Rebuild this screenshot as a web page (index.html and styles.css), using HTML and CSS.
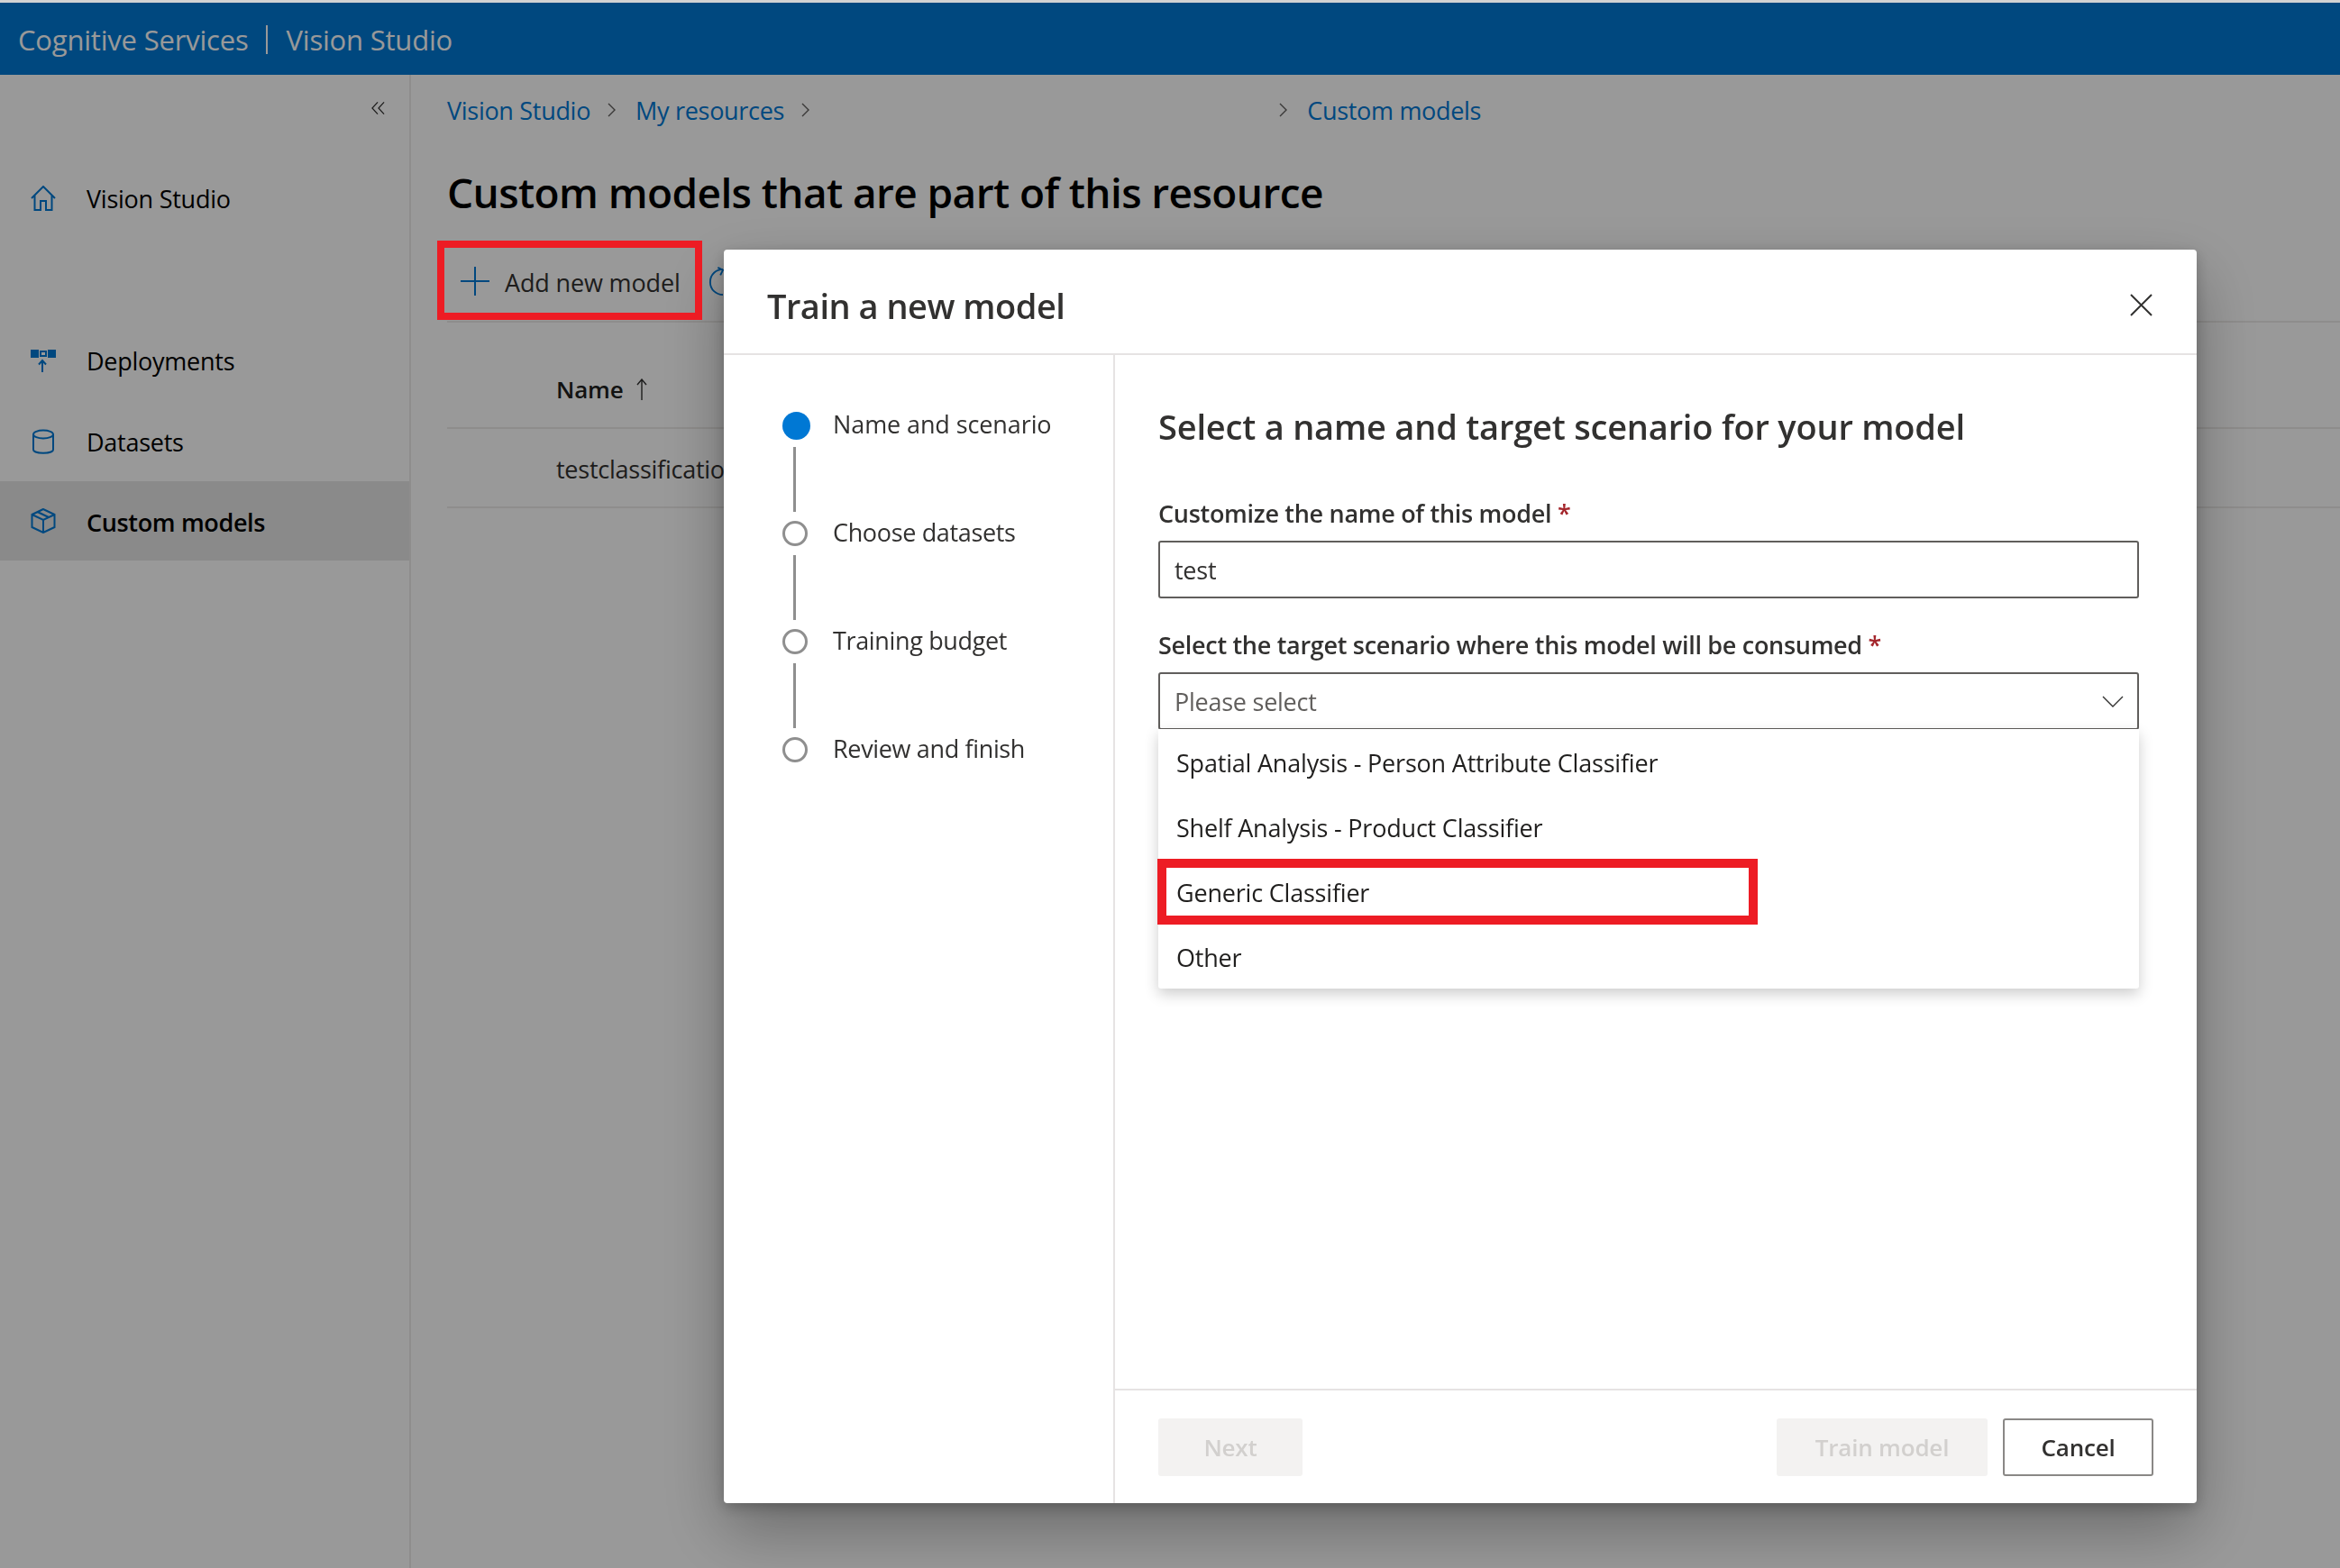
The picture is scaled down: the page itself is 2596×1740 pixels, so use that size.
FILE: index.html
```html
<!DOCTYPE html>
<html lang="en">
<head>
<meta charset="utf-8">
<title>Vision Studio</title>
<link rel="stylesheet" href="styles.css">
</head>
<body>
<div class="page">
  <div class="topstrip"></div>
  <header class="appbar"><span>Cognitive Services</span><i class="appbar-sep"></i><span>Vision Studio</span></header>
  <div class="shell">
    <aside class="sidebar">
      <div class="collapse-row">
        <svg class="ic-collapse" viewBox="0 0 16 16"><path d="M7.500 1 1 8l6.500 7M15 1 8.500 8l6.500 7"/></svg>
      </div>
      <nav>
        <a class="nav-item nav-home">
          <svg class="nav-ic" viewBox="0 0 28 28"><path d="M1 14 14 1l13 13M4.500 11v16h6.500v-10h6v10h6.500V11"/></svg>
          <span>Vision Studio</span>
        </a>
        <a class="nav-item nav-deploy">
          <svg class="nav-ic" viewBox="0 0 28 28"><rect class="solid" x="0" y="1" width="8" height="7"/><rect x="11" y="2" width="6" height="5"/><rect class="solid" x="20" y="1" width="8" height="7"/><path d="M13 25V13M9 16.500l4-4.500 4 4.500"/></svg>
          <span>Deployments</span>
        </a>
        <a class="nav-item">
          <svg class="nav-ic" viewBox="0 0 28 28"><path d="M3 6v17c0 5 22 5 22 0V6"/><ellipse cx="14" cy="6" rx="11" ry="4.500"/></svg>
          <span>Datasets</span>
        </a>
        <a class="nav-item is-active">
          <svg class="nav-ic" viewBox="0 0 28 28"><path d="M14 1 1.500 7v14L14 27l12.500-6V7zM1.500 7 14 13l12.500-6M14 13v14M7.500 4l12.500 6"/></svg>
          <span>Custom models</span>
        </a>
      </nav>
    </aside>
    <main class="content">
      <div class="crumbs">
        <a>Vision Studio</a>
        <svg class="crumb-ic" viewBox="0 0 10 16"><path d="M1 1l7 7-7 7"/></svg>
        <a>My resources</a>
        <svg class="crumb-ic" viewBox="0 0 10 16"><path d="M1 1l7 7-7 7"/></svg>
        <span class="crumb-gap"></span>
        <svg class="crumb-ic" viewBox="0 0 10 16"><path d="M1 1l7 7-7 7"/></svg>
        <a>Custom models</a>
      </div>
      <h1 class="title">Custom models that are part of this resource</h1>
      <div class="toolbar">
        <button class="tool-btn">
          <svg class="ic-plus" viewBox="0 0 34 34"><path d="M17 1v32M1 17h32"/></svg>
          <span>Add new model</span>
        </button>
        <svg class="ic-refresh" viewBox="0 0 34 34"><path d="M17 3C9 3 2 9 2 18s7 15 15 15M11 1l6 3-3 6"/></svg>
      </div>
      <div class="table-head"><span>Name</span><svg class="ic-sort" viewBox="0 0 12 24"><path d="M6 24V1M1 7l5-6 5 6"/></svg></div>
      <div class="table-row">testclassification</div>
    </main>
  </div>
</div>

<div class="overlay">
  <i class="overlay-strip"></i>
  <section class="modal">
    <div class="modal-head">
      <h2>Train a new model</h2>
      <svg class="ic-close" viewBox="0 0 25 25"><path d="M1 1l23 23M24 1 1 24"/></svg>
    </div>
    <div class="modal-body">
      <ol class="steps">
        <li class="step is-current"><i class="dot"></i><span>Name and scenario</span></li>
        <li class="step-line"></li>
        <li class="step"><i class="dot"></i><span>Choose datasets</span></li>
        <li class="step-line"></li>
        <li class="step"><i class="dot"></i><span>Training budget</span></li>
        <li class="step-line"></li>
        <li class="step"><i class="dot"></i><span>Review and finish</span></li>
      </ol>
      <div class="pane">
        <div class="form">
          <h3>Select a name and target scenario for your model</h3>
          <label class="field-label">Customize the name of this model <b>*</b></label>
          <div class="input">test</div>
          <label class="field-label second">Select the target scenario where this model will be consumed <b>*</b></label>
          <div class="select">
            <div class="input placeholder"><span>Please select</span>
              <svg class="ic-chev" viewBox="0 0 24 13"><path d="M1 1l11 11L23 1"/></svg>
            </div>
            <ul class="menu">
              <li>Spatial Analysis - Person Attribute Classifier</li>
              <li>Shelf Analysis - Product Classifier</li>
              <li>Generic Classifier<i class="mark mark-item"></i></li>
              <li>Other</li>
            </ul>
          </div>
        </div>
        <div class="footer">
          <button class="btn disabled next">Next</button>
          <button class="btn disabled train">Train model</button>
          <button class="btn cancel">Cancel</button>
        </div>
      </div>
    </div>
  </section>
  <i class="mark mark-add"></i>
</div>
</body>
</html>
```

FILE: styles.css
```css
* { box-sizing: border-box; }
html, body { margin: 0; height: 100%; }
body {
  width: 2596px;
  height: 1740px;
  overflow: hidden;
  background: #fff;
  font-family: "Open Sans", "Noto Sans", "Liberation Sans", sans-serif;
  font-size: 27px;
  letter-spacing: -0.25px;
  color: #201f1e;
}
h1, h2, h3, ol, ul { margin: 0; padding: 0; list-style: none; }
button { font: inherit; letter-spacing: inherit; border: 0; background: none; padding: 0; color: inherit; }
svg { display: block; fill: none; stroke: currentColor; flex: none; }

.page { height: 1740px; display: flex; flex-direction: column; }
.topstrip { height: 3px; background: #fff; }
.appbar {
  height: 80px;
  background: #0078d4;
  color: #fff;
  display: flex;
  align-items: center;
  padding: 1px 20px 0;
  font-size: 31px;
  letter-spacing: -0.2px;
}
.appbar-sep { width: 2px; height: 32px; background: #fff; margin: 0 20px; }

.shell { flex: 1; display: flex; min-height: 0; }
.sidebar { width: 456px; border-right: 2px solid #edebe9; flex: none; }
.collapse-row { height: 93px; display: flex; justify-content: flex-end; padding: 29px 27px 0 0; }
.ic-collapse { width: 15px; height: 16px; stroke-width: 1.300; color: #323130; }
.nav-item {
  height: 88px;
  display: flex;
  align-items: center;
  color: #000;
}
.nav-home { margin-bottom: 94px; }
.nav-deploy span { padding-bottom: 3px; }
.nav-item.is-active { background: #e6e6e6; font-weight: 600; letter-spacing: -0.35px; }
.nav-item.is-active span { padding-top: 3px; }
.nav-ic { width: 28px; height: 28px; margin: 0 34px 0 34px; color: #0078d4; stroke-width: 2; }
.nav-ic .solid { fill: #0078d4; }

.content { flex: 1; padding-left: 40px; min-width: 0; }
.crumbs { height: 78px; display: flex; align-items: center; color: #0078d4; letter-spacing: -0.3px; }
.crumb-ic { width: 10px; height: 16px; margin: 0 21px 0 19px; color: #605e5c; stroke-width: 1.400; }
.crumb-gap { width: 480px; }
.title { height: 106px; line-height: 104px; font-size: 46px; font-weight: 600; color: #000; letter-spacing: -0.6px; }
.toolbar { height: 91px; display: flex; align-items: center; border-bottom: 2px solid #edebe9; gap: 31px; }
.tool-btn { display: flex; align-items: center; padding-left: 14px; gap: 16px; color: #323130; letter-spacing: -0.15px; }
.tool-btn span { padding-top: 3px; }
.ic-plus { width: 34px; height: 34px; color: #0078d4; stroke-width: 2; }
.ic-refresh { width: 32px; height: 32px; color: #0078d4; stroke-width: 2; }
.table-head {
  height: 118px;
  border-bottom: 2px solid #edebe9;
  display: flex;
  align-items: center;
  gap: 15px;
  padding: 32px 0 0 121px;
  font-weight: 600;
  font-size: 26px;
  letter-spacing: -0.2px;
}
.ic-sort { width: 12px; height: 24px; color: #323130; stroke-width: 1.400; }
.table-row { height: 88px; line-height: 90px; border-bottom: 2px solid #edebe9; padding-left: 121px; color: #323130; }

.overlay { position: fixed; inset: 0; background: rgba(0, 0, 0, 0.4); }
.overlay-strip { position: absolute; left: 0; right: 0; top: 0; height: 3px; background: #d2d2d2; }
.modal {
  position: absolute;
  left: 803px;
  top: 277px;
  width: 1634px;
  height: 1391px;
  background: #fff;
  border-radius: 4px;
  box-shadow: 0 30px 70px rgba(0, 0, 0, 0.3), 0 5px 16px rgba(0, 0, 0, 0.22);
  display: flex;
  flex-direction: column;
  color: #323130;
}
.modal-head {
  height: 117px;
  flex: none;
  border-bottom: 2px solid #e6e3e3;
  display: flex;
  align-items: center;
  justify-content: space-between;
  padding: 0 49px 0 48px;
}
.modal-head h2 { font-size: 38px; font-weight: 600; letter-spacing: -0.5px; padding-top: 9px; }
.ic-close { width: 25px; height: 25px; margin-top: 8px; stroke-width: 2; color: #323130; }
.modal-body { flex: 1; display: flex; min-height: 0; }

.steps { width: 434px; flex: none; border-right: 2px solid #e6e3e3; padding: 56px 0 0 65px; }
.step { height: 40px; display: flex; align-items: center; gap: 28px; letter-spacing: -0.35px; }
.step.is-current { font-weight: 500; color: #323130; letter-spacing: -0.1px; }
.dot { width: 28px; height: 28px; border-radius: 50%; border: 3px solid #8f8f8f; flex: none; margin-top: 4px; }
.is-current .dot { width: 31px; height: 31px; margin: 4px -3px 0 0; background: #0078d4; border: 0; }
.step-line { width: 3px; height: 72px; background: #8f8f8f; margin: 6px 0 2px 12px; }

.pane { flex: 1; display: flex; flex-direction: column; min-width: 0; }
.form { flex: 1; padding: 53px 64px 0 48px; }
.form h3 { font-size: 38px; font-weight: 600; line-height: 52px; letter-spacing: -0.2px; height: 85px; }
.field-label { display: block; height: 49px; line-height: 37px; font-weight: 600; letter-spacing: -0.3px; margin-top: 19px; }
.field-label.second { margin-top: 34px; height: 48px; line-height: 36px; }
.field-label b { color: #a4262c; font-weight: 600; }
.input {
  height: 64px;
  border: 2px solid #605e5c;
  border-radius: 3px;
  display: flex;
  align-items: center;
  justify-content: space-between;
  padding: 0 26px 0 16px;
}
.placeholder { color: #605e5c; padding-right: 15px; }
.ic-chev { width: 24px; height: 13px; stroke-width: 1.400; color: #323130; }
.select { position: relative; }
.menu {
  position: absolute;
  top: 63px;
  left: 0;
  right: 0;
  background: #fff;
  border-radius: 0 0 3px 3px;
  box-shadow: 0 6px 16px rgba(0, 0, 0, 0.2);
  color: #201f1e;
}
.menu li { position: relative; height: 72px; line-height: 75px; padding-left: 20px; letter-spacing: -0.2px; }
.mark { position: absolute; display: block; border-style: solid; border-color: #ed1c24; }
.mark-item { left: -1px; top: 0; width: 666px; height: 73px; border-width: 10px; }
.mark-add { left: 485px; top: 267px; width: 294px; height: 88px; border-width: 8px; }

.footer {
  height: 127px;
  flex: none;
  border-top: 2px solid #e6e3e3;
  display: flex;
  padding: 31px 48px 0;
  gap: 17px;
}
.btn { width: 167px; height: 64px; border-radius: 3px; font-weight: 600; font-size: 26px; letter-spacing: -0.2px; }
.btn.disabled { background: #f3f2f1; color: #d2d0ce; }
.btn.next { width: 160px; margin-right: auto; }
.btn.train { width: 234px; }
.btn.cancel { border: 2px solid #8a8886; background: #fff; color: #323130; }
```
